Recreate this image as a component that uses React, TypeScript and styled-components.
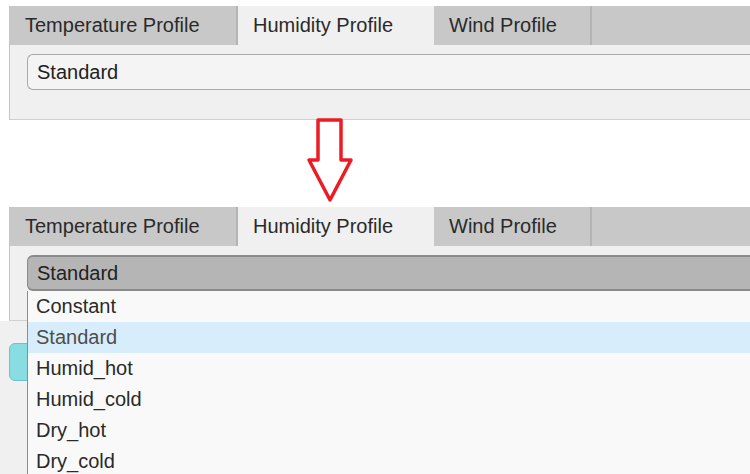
import React from "react";
import styled, { createGlobalStyle } from "styled-components";

const tabs = [
  { label: "Temperature Profile", width: 228 },
  { label: "Humidity Profile", width: 196 },
  { label: "Wind Profile", width: 158 },
];

const options = ["Constant", "Standard", "Humid_hot", "Humid_cold", "Dry_hot", "Dry_cold"];

const GlobalStyle = createGlobalStyle`
  html, body {
    margin: 0;
    padding: 0;
    background: #fff;
    overflow: hidden;
  }
  body {
    width: 750px;
    height: 474px;
    font-family: "Liberation Sans", Arial, sans-serif;
  }
`;

const Page = styled.div`
  display: flex;
  flex-direction: column;
  padding-top: 6px;
  height: 474px;
  box-sizing: border-box;
`;

const Panel = styled.div`
  display: flex;
  flex-direction: column;
  margin-left: 9px;
  width: 770px;
  height: 114px;
  box-sizing: border-box;
  background: #f0f0f0;
  border-left: 1px solid #c4c4c4;
  border-bottom: 1px solid #d0d0d0;
  position: relative;
  z-index: 2;
`;

const TabBar = styled.div`
  display: flex;
  height: 39px;
  flex-shrink: 0;
  background: #c8c8c8;
`;

const Tab = styled.div<{ $active?: boolean; $width: number }>`
  display: flex;
  align-items: center;
  box-sizing: border-box;
  width: ${(p) => p.$width}px;
  padding-left: 15px;
  font-size: 20px;
  color: #2a2a2a;
  background: ${(p) => (p.$active ? "#f0f0f0" : "#c8c8c8")};
  border-right: ${(p) => (p.$active ? "none" : "2px solid #b4b4b4")};
`;

const PanelBody = styled.div`
  padding: 9px 0 0 17px;
`;

const SelectWrap = styled.div`
  position: relative;
`;

const Select = styled.div<{ $open?: boolean }>`
  display: flex;
  align-items: center;
  height: 36px;
  box-sizing: border-box;
  padding-left: 9px;
  font-size: 20px;
  color: #222;
  background: ${(p) => (p.$open ? "#b5b5b5" : "#f4f4f4")};
  border: 1px solid ${(p) => (p.$open ? "#8a8a8a" : "#a8a8a8")};
  border-width: ${(p) => (p.$open ? "2px 0 2px 1px" : "1px 0 1px 1px")};
  border-radius: 6px 0 0 6px;
`;

const OptionList = styled.ul`
  position: absolute;
  top: 36px;
  left: 0;
  right: 0;
  margin: 0;
  padding: 0;
  list-style: none;
  background: #f9f9f9;
  border-left: 1px solid #8c8c8c;
  z-index: 5;
`;

const Option = styled.li<{ $selected?: boolean }>`
  display: flex;
  align-items: center;
  height: 31px;
  padding-left: 8px;
  font-size: 20px;
  color: ${(p) => (p.$selected ? "#4d4d4d" : "#2a2a2a")};
  background: ${(p) => (p.$selected ? "#d8edfb" : "transparent")};
`;

const ArrowRow = styled.div`
  height: 87px;
  padding-left: 305px;
  position: relative;
  z-index: 3;
`;

const LowerArea = styled.div`
  flex: 1;
  background: #f0f0f0;
  padding: 22px 0 0 9px;
`;

const RunButton = styled.div`
  width: 60px;
  height: 38px;
  box-sizing: border-box;
  background: #88dde2;
  border: 1px solid #6cc3c9;
  border-radius: 6px;
`;

const DownArrow = () => (
  <svg width="52" height="88" viewBox="0 0 52 88" style={{ marginTop: -3 }}>
    <polygon
      points="13,3 36,3 36,43 46,43 25,83 4,43 13,43"
      fill="#fff"
      stroke="#ec1c24"
      strokeWidth="3.5"
      strokeLinejoin="round"
    />
  </svg>
);

const ProfileTabs = () => (
  <TabBar>
    {tabs.map((t) => (
      <Tab key={t.label} $width={t.width} $active={t.label === "Humidity Profile"}>
        {t.label}
      </Tab>
    ))}
  </TabBar>
);

export default function App() {
  return (
    <>
      <GlobalStyle />
      <Page>
        <Panel>
          <ProfileTabs />
          <PanelBody>
            <Select>Standard</Select>
          </PanelBody>
        </Panel>
        <ArrowRow>
          <DownArrow />
        </ArrowRow>
        <Panel>
          <ProfileTabs />
          <PanelBody>
            <SelectWrap>
              <Select $open>Standard</Select>
              <OptionList>
                {options.map((o) => (
                  <Option key={o} $selected={o === "Standard"}>
                    {o}
                  </Option>
                ))}
              </OptionList>
            </SelectWrap>
          </PanelBody>
        </Panel>
        <LowerArea>
          <RunButton />
        </LowerArea>
      </Page>
    </>
  );
}
